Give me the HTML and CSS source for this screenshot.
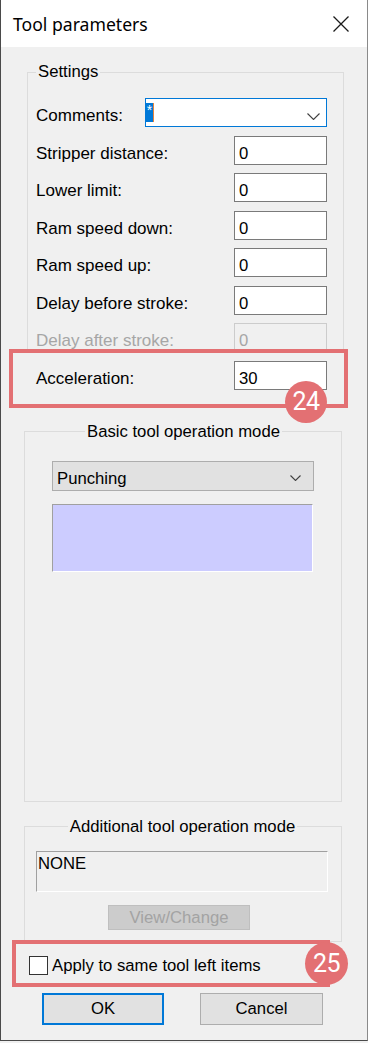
FILE: index.html
```html
<!DOCTYPE html>
<html>
<head>
<meta charset="utf-8">
<title>Tool parameters</title>
<link rel="stylesheet" href="styles.css">
</head>
<body>
<div class="window">
  <div class="titlebar">
    <span class="title">Tool parameters</span>
    <svg class="close" width="16" height="16" viewBox="0 0 16 16" aria-label="Close">
      <path d="M0.5 0.5 L15.5 15.5 M15.5 0.5 L0.5 15.5" stroke="#1a1a1a" stroke-width="1.3" fill="none"/>
    </svg>
  </div>
  <div class="client">
    <fieldset class="group settings">
      <legend>Settings</legend>
      <div class="rows">
        <div class="row">
          <span class="label">Comments:</span>
          <div class="combo">
            <span class="sel">*</span>
            <svg class="chev" width="13" height="7" viewBox="0 0 13 7"><path d="M0.5 0.5 L6.5 6.5 L12.5 0.5" stroke="#404040" stroke-width="1.1" fill="none"/></svg>
          </div>
        </div>
        <div class="row"><span class="label">Stripper distance:</span><div class="field">0</div></div>
        <div class="row"><span class="label">Lower limit:</span><div class="field">0</div></div>
        <div class="row"><span class="label">Ram speed down:</span><div class="field">0</div></div>
        <div class="row"><span class="label">Ram speed up:</span><div class="field">0</div></div>
        <div class="row"><span class="label">Delay before stroke:</span><div class="field">0</div></div>
        <div class="row disabled"><span class="label">Delay after stroke:</span><div class="field">0</div></div>
        <div class="row marked">
          <span class="label">Acceleration:</span><div class="field">30</div>
          <span class="badge badge-24">24</span>
        </div>
      </div>
    </fieldset>

    <fieldset class="group centered basic">
      <legend>Basic tool operation mode</legend>
      <div class="dropdown">
        <span>Punching</span>
        <svg class="chev" width="11" height="6" viewBox="0 0 11 6"><path d="M0.5 0.5 L5.5 5.5 L10.5 0.5" stroke="#404040" stroke-width="1.1" fill="none"/></svg>
      </div>
      <div class="preview"></div>
    </fieldset>

    <fieldset class="group centered additional">
      <legend>Additional tool operation mode</legend>
      <div class="listbox">NONE</div>
      <div class="btn disabled-btn">View/Change</div>
    </fieldset>

    <div class="apply">
      <span class="checkbox"></span>
      <span class="apply-label">Apply to same tool left items</span>
      <span class="badge badge-25">25</span>
    </div>

    <div class="buttons">
      <div class="btn ok">OK</div>
      <div class="btn cancel">Cancel</div>
    </div>
  </div>
</div>
</body>
</html>
```

FILE: styles.css
```css
* { box-sizing: border-box; }
html, body { margin: 0; padding: 0; }
body {
  width: 368px;
  height: 1043px;
  background: #f0f0f0;
  font-family: "Liberation Sans", Arial, sans-serif;
  font-size: 16.7px;
  line-height: 19px;
  color: #000;
  overflow: hidden;
}
.window {
  width: 368px;
  height: 1041px;
  border-left: 1px solid #4a4a4a;
  border-right: 1px solid #8a8a8a;
  border-bottom: 1px solid #4a4a4a;
  background: #f0f0f0;
  display: flex;
  flex-direction: column;
}
.titlebar {
  flex: none;
  height: 47px;
  background: #fff;
  display: flex;
  align-items: center;
  justify-content: space-between;
  padding: 0 18px 0 12px;
}
.title {
  font-family: "Noto Sans", "Open Sans", sans-serif;
  font-size: 17.6px;
  color: #000;
  padding-top: 1px;
}
.close { display: block; }
.client { flex: 1; }

/* group boxes */
.group {
  border: 1px solid #dcdcdc;
  margin: 0;
  min-width: 0;
}
.group legend {
  padding: 0 2px;
  line-height: 20px;
  font-size: 16.7px;
}
.group.centered legend { margin-left: auto; margin-right: auto; }

.settings {
  margin: 15px 23px 0 26px;
  padding: 16px 16px 10px 8px;
}
.rows {
  display: grid;
  grid-template-rows: repeat(8, 29px);
  row-gap: 8.5px;
}
.row {
  display: flex;
  align-items: flex-start;
  justify-content: space-between;
}
.label {
  padding-top: 8px;
  font-size: 17px;
  white-space: nowrap;
}
.field {
  width: 93px;
  height: 29px;
  border: 1px solid #7a7a7a;
  background: #fff;
  padding: 7px 4px 0 4px;
}
.row.disabled .label { color: #a6a6a6; }
.row.disabled .field {
  border-color: #cccccc;
  background: #f0f0f0;
  color: #a6a6a6;
}
.combo {
  width: 182px;
  height: 29px;
  border: 1px solid #0078d7;
  background: #fff;
  display: flex;
  align-items: flex-start;
  justify-content: space-between;
  padding: 4px 6px 0 0;
}
.combo .sel {
  width: 8px;
  height: 19px;
  background: #0078d7;
  border-right: 1px solid #e8833a;
  color: #fff;
  font-size: 14px;
  line-height: 14px;
  text-align: center;
}
.combo .chev { margin-top: 10px; }

/* annotation over acceleration row */
.row.marked { position: relative; }
.row.marked::before {
  content: "";
  position: absolute;
  left: -27px;
  right: -21px;
  top: -12px;
  bottom: -18px;
  border: 4px solid #e37073;
  background: #f0f0f0;
}
.row.marked .label,
.row.marked .field { position: relative; }

.badge {
  position: absolute;
  border-radius: 50%;
  background: #e37073;
  color: #fff;
  font-family: "Roboto", "DejaVu Sans", sans-serif;
  font-size: 25px;
  letter-spacing: -0.5px;
  display: flex;
  align-items: center;
  justify-content: center;
}
.badge-24 { left: 249px; top: 20px; width: 42px; height: 42px; }
.badge-25 { left: 289px; top: -2px; width: 43px; height: 43px; }

/* basic mode group */
.basic {
  margin: 21px 25px 0 23px;
  padding: 19px 26px 229px 27px;
}
.dropdown {
  width: 262px;
  height: 30px;
  background: #e1e1e1;
  border: 1px solid #adadad;
  display: flex;
  align-items: flex-start;
  justify-content: space-between;
  padding: 7px 12px 0 4px;
}
.dropdown .chev { margin-top: 6px; }
.preview {
  width: 261px;
  height: 68px;
  margin-top: 13px;
  background: #ccccff;
  border-top: 1px solid #a0a0a0;
  border-left: 1px solid #a0a0a0;
  border-right: 1px solid #ffffff;
  border-bottom: 1px solid #ffffff;
}

/* additional group */
.additional {
  margin: 15px 25px 0 23px;
  padding: 14px 12px 11px 11px;
}
.listbox {
  width: 292px;
  height: 41px;
  background: #f0f0f0;
  border-top: 1px solid #a0a0a0;
  border-left: 1px solid #a0a0a0;
  border-right: 1px solid #ffffff;
  border-bottom: 1px solid #ffffff;
  padding: 2px 1px 0 1px;
}
.btn {
  display: flex;
  align-items: center;
  justify-content: center;
  background: #e1e1e1;
  border: 1px solid #adadad;
}
.disabled-btn {
  width: 142px;
  height: 25px;
  margin: 13px 0 0 72px;
  background: #cccccc;
  border-color: #bfbfbf;
  color: #a3a3a3;
}

/* apply row with annotation */
.apply {
  position: relative;
  width: 318px;
  height: 47px;
  margin: -2px 0 0 11px;
  border: 4px solid #e37073;
  display: flex;
  align-items: center;
  padding: 4px 0 0 13px;
  gap: 4px;
}
.checkbox {
  width: 19px;
  height: 19px;
  border: 1px solid #333;
  background: #fff;
}

.buttons {
  display: flex;
  gap: 36px;
  margin: 6px 0 0 41px;
}
.ok, .cancel { height: 32px; }
.ok { width: 122px; border: 2px solid #0078d7; }
.cancel { width: 123px; }
```
